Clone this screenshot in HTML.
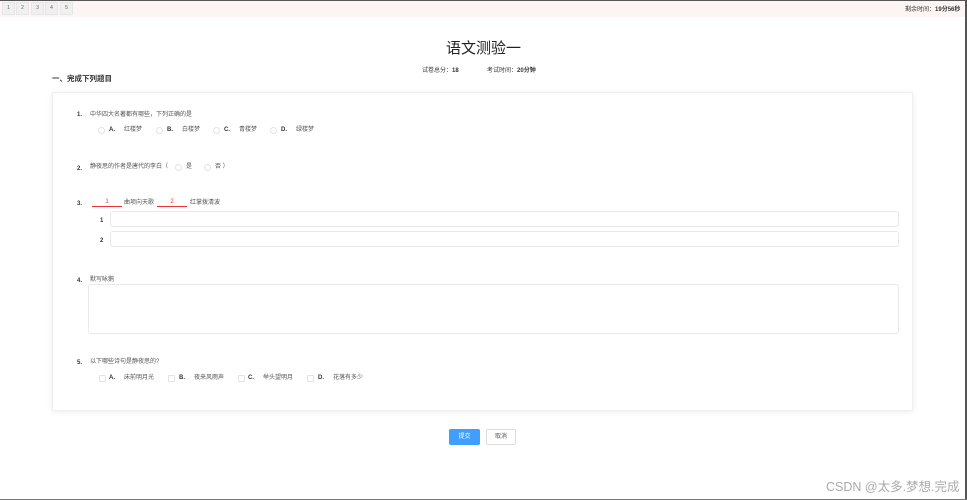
<!DOCTYPE html>
<html><head><meta charset="utf-8"><style>
*{margin:0;padding:0;box-sizing:border-box}
body{width:967px;height:500px;background:#fff;position:relative;overflow:hidden;font-family:"Liberation Sans","Noto Sans CJK SC",sans-serif;color:#333}
.a{position:absolute;white-space:nowrap;line-height:1}
.s{font-size:6px;color:#555;margin-top:2px}
.b{font-weight:bold;color:#333}
.r{position:absolute;width:7px;height:7px;border:1px solid #e3e3e3;border-radius:50%;margin-top:2px}
.in{position:absolute;border:1px solid #e8e8e8;border-radius:3px;background:#fff}
.t{position:absolute;top:2px;width:13px;height:13px;background:#f0f0f0;border:1px solid #e6e6e6;font-size:5px;color:#666;text-align:center;line-height:11px}
</style></head><body>
<div style="position:absolute;left:0;top:0;width:967px;height:1px;background:#555"></div>
<div style="position:absolute;left:0;top:1px;width:965px;height:16px;background:#fdf5f3"></div>
<div class="t" style="left:2px">1</div><div class="t" style="left:16px">2</div><div class="t" style="left:31px">3</div><div class="t" style="left:45px">4</div><div class="t" style="left:60px">5</div>
<div class="a s" style="left:905px;top:5px;color:#333">剩余时间：<b>19分56秒</b></div>
<div style="position:absolute;right:0;top:0;width:2px;height:500px;background:#555"></div>
<div style="position:absolute;left:0;bottom:0;width:967px;height:1px;background:#777"></div>

<div class="a" style="left:0;width:967px;text-align:center;top:41px;font-size:15px;color:#222">语文测验一</div>
<div class="a s" style="left:422px;top:66px;color:#333">试卷总分：<b>18</b></div>
<div class="a s" style="left:487px;top:66px;color:#333">考试时间：<b>20分钟</b></div>
<div class="a" style="left:52px;top:75px;font-size:7.5px;font-weight:bold">一、完成下列题目</div>

<div style="position:absolute;left:52px;top:92px;width:861px;height:319px;border:1px solid #f0f0f0;box-shadow:0 1px 6px rgba(0,0,0,.08)"></div>

<div class="a s b" style="left:77px;top:110px">1.</div>
<div class="a s" style="left:90px;top:110px">中华四大名著都有哪些，下列正确的是</div>
<div class="r" style="left:98px;top:125px"></div><div class="a s b" style="left:109px;top:125px">A.</div><div class="a s" style="left:124px;top:125px">红楼梦</div>
<div class="r" style="left:156px;top:125px"></div><div class="a s b" style="left:167px;top:125px">B.</div><div class="a s" style="left:182px;top:125px">白楼梦</div>
<div class="r" style="left:213px;top:125px"></div><div class="a s b" style="left:224px;top:125px">C.</div><div class="a s" style="left:239px;top:125px">青楼梦</div>
<div class="r" style="left:270px;top:125px"></div><div class="a s b" style="left:281px;top:125px">D.</div><div class="a s" style="left:296px;top:125px">绿楼梦</div>

<div class="a s b" style="left:77px;top:164px">2.</div>
<div class="a s" style="left:90px;top:162px">静夜思的作者是唐代的李白（</div>
<div class="r" style="left:175px;top:162px"></div><div class="a s" style="left:186px;top:162px">是</div>
<div class="r" style="left:204px;top:162px"></div><div class="a s" style="left:215px;top:162px">否 ）</div>

<div class="a s b" style="left:77px;top:199px">3.</div>
<div class="a s" style="left:92px;top:197px;width:30px;text-align:center;color:#e33;border-bottom:1px solid #e33;padding-bottom:1px">1</div>
<div class="a s" style="left:124px;top:198px">曲项向天歌</div>
<div class="a s" style="left:157px;top:197px;width:30px;text-align:center;color:#e33;border-bottom:1px solid #e33;padding-bottom:1px">2</div>
<div class="a s" style="left:190px;top:198px">红掌拨清波</div>
<div class="a s b" style="left:100px;top:216px">1</div>
<div class="in" style="left:110px;top:211px;width:789px;height:16px"></div>
<div class="a s b" style="left:100px;top:236px">2</div>
<div class="in" style="left:110px;top:231px;width:789px;height:16px"></div>

<div class="a s b" style="left:77px;top:276px">4.</div>
<div class="a s" style="left:90px;top:275px">默写咏鹅</div>
<div class="in" style="left:88px;top:284px;width:811px;height:50px"></div>

<div class="a s b" style="left:77px;top:358px">5.</div>
<div class="a s" style="left:90px;top:357px">以下哪些诗句是静夜思的?</div>
<div class="r" style="left:99px;top:373px;border-radius:1px"></div><div class="a s b" style="left:109px;top:373px">A.</div><div class="a s" style="left:124px;top:373px">床前明月光</div>
<div class="r" style="left:168px;top:373px;border-radius:1px"></div><div class="a s b" style="left:179px;top:373px">B.</div><div class="a s" style="left:194px;top:373px">夜来风雨声</div>
<div class="r" style="left:238px;top:373px;border-radius:1px"></div><div class="a s b" style="left:248px;top:373px">C.</div><div class="a s" style="left:263px;top:373px">举头望明月</div>
<div class="r" style="left:307px;top:373px;border-radius:1px"></div><div class="a s b" style="left:318px;top:373px">D.</div><div class="a s" style="left:333px;top:373px">花落有多少</div>

<div style="position:absolute;left:449px;top:429px;width:31px;height:16px;background:#409eff;border-radius:2px;color:#fff;font-size:6px;line-height:16px;text-align:center">提交</div>
<div style="position:absolute;left:486px;top:429px;width:30px;height:16px;border:1px solid #ddd;border-radius:2px;color:#555;font-size:6px;line-height:14px;text-align:center">取消</div>

<div class="a" style="left:826px;top:481px;font-size:12.5px;color:#aaa">CSDN @太多.梦想.完成</div>
</body></html>
